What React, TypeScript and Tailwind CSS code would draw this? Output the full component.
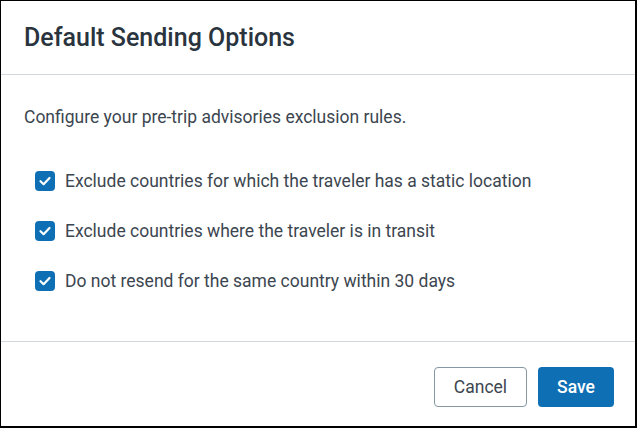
import React from "react";

function Check() {
  return (
    <span className="flex h-[20px] w-[20px] shrink-0 items-center justify-center rounded-[4px] bg-[#0f6fb4]">
      <svg width="20" height="20" viewBox="0 0 20 20" fill="none">
        <path d="M5.5 10.2 L8.6 13.2 L14.5 7" stroke="white" strokeWidth="2.2" strokeLinecap="round" strokeLinejoin="round" />
      </svg>
    </span>
  );
}

export default function App() {
  const items = [
    "Exclude countries for which the traveler has a static location",
    "Exclude countries where the traveler is in transit",
    "Do not resend for the same country within 30 days",
  ];
  return (
    <div className="h-[428px] w-[637px] bg-white" style={{ fontFamily: "Roboto, 'Liberation Sans', sans-serif" }}>
      <div className="flex h-[428px] w-[637px] flex-col border-l border-t border-r-2 border-b-2 border-black bg-white">
        <div className="flex h-[74px] items-center border-b border-[#cfd8dc] px-[23px] pt-[1px]">
          <h1 className="text-[25px] font-medium text-[#2a343e]">Default Sending Options</h1>
        </div>
        <div className="flex flex-1 flex-col px-[23px] pt-[32px]">
          <p className="text-[17.5px] leading-[20px] text-[#3c4650]">Configure your pre-trip advisories exclusion rules.</p>
          <div className="mt-[44px] flex flex-col gap-[30px] pl-[11px]">
            {items.map((t) => (
              <div key={t} className="flex h-[20px] items-center gap-[10px]">
                <Check />
                <span className="text-[17.5px] leading-[20px] text-[#3c4650]">{t}</span>
              </div>
            ))}
          </div>
        </div>
        <div className="flex h-[85px] items-start justify-end gap-[11px] border-t border-[#cfd8dc] pr-[21px] pt-[25px]">
          <button className="h-[40px] w-[93px] rounded-[4px] border border-[#8597a3] bg-white text-[17.5px] text-[#3c4650]">Cancel</button>
          <button className="h-[40px] w-[76px] rounded-[4px] bg-[#0f6fb4] text-[17.5px] font-medium text-white">Save</button>
        </div>
      </div>
    </div>
  );
}
